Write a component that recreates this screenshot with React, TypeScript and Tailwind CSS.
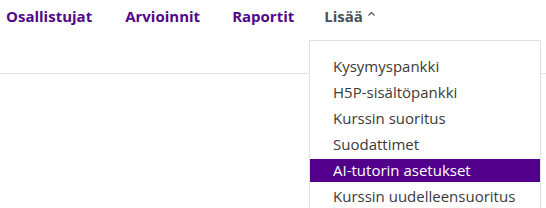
import React from "react";

const items = [
  "Kysymyspankki",
  "H5P-sisältöpankki",
  "Kurssin suoritus",
  "Suodattimet",
  "AI-tutorin asetukset",
  "Kurssin uudelleensuoritus",
];

export default function App() {
  return (
    <div
      className="relative w-[546px] h-[208px] overflow-hidden bg-white"
      style={{ fontFamily: '"Open Sans", sans-serif' }}
    >
      <div className="h-[74px] border-b border-[#dee2e6]">
        <nav className="flex items-center pl-[6px] pt-[5px] text-[15px] font-bold leading-[22px]">
          <span className="text-[#52078a]">Osallistujat</span>
          <span className="ml-[33px] text-[#52078a]">Arvioinnit</span>
          <span className="ml-[32px] text-[#52078a]">Raportit</span>
          <span className="ml-[30px] flex items-center gap-[4px] text-[#4b5058]">
            Lisää
            <svg width="9" height="6" viewBox="0 0 9 6" className="mt-[-4px]">
              <path d="M1.5 4.5 L4.5 1.5 L7.5 4.5" fill="none" stroke="#4b5058" strokeWidth="1.1" />
            </svg>
          </span>
        </nav>
      </div>
      <div className="absolute left-[309px] top-[40px] w-[232px] h-[200px] bg-white border border-[#dee2e6] pt-[14px]">
        <ul className="flex flex-col gap-[3px] text-[15px] leading-[23px] text-[#3a3a3a]">
          {items.map((t) => (
            <li
              key={t}
              className={
                t === "AI-tutorin asetukset"
                  ? "h-[23px] pl-[23px] bg-[#52008c] text-white"
                  : "h-[23px] pl-[23px]"
              }
            >
              {t}
            </li>
          ))}
        </ul>
      </div>
    </div>
  );
}
